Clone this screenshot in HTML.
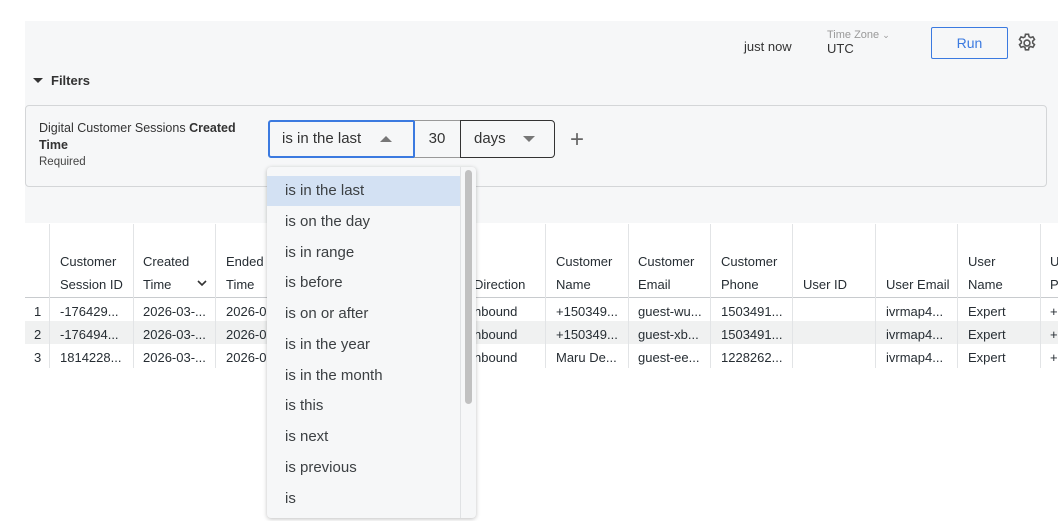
<!DOCTYPE html>
<html><head><style>
*{box-sizing:border-box;margin:0;padding:0}
body{width:1058px;height:521px;overflow:hidden;background:#fff;font-family:"Liberation Sans",Arial,sans-serif;color:#262d33;position:relative}
.a{position:absolute}
.panel{left:25px;top:21px;width:1033px;height:202px;background:#f6f7f8}
.th,.td{position:absolute;font-size:13px;color:#262d33;white-space:nowrap}
.vl{position:absolute;width:1px;background:#e2e4e6;top:224px;height:144px}
.item{position:absolute;left:0;width:193px;height:30px;line-height:30px;padding-left:18px;font-size:15px;color:#3c4043}
.tri{position:absolute;width:0;height:0;border-left:6px solid transparent;border-right:6px solid transparent}
</style></head><body>
<div class="a panel"></div>
<div class="a" style="left:744px;top:39px;font-size:13px;color:#333">just now</div>
<div class="a" style="left:827px;top:29px;font-size:11px;color:#999">Time Zone <span style="font-size:9px">&#8964;</span></div>
<div class="a" style="left:827px;top:41px;font-size:13px;color:#333">UTC</div>
<div class="a" style="left:931px;top:27px;width:77px;height:32px;border:1px solid #3b7ae0;border-radius:2px;color:#3b7ae0;font-size:14px;text-align:center;line-height:30px">Run</div>
<svg class="a" style="left:1016px;top:32px" width="22" height="22" viewBox="0 0 24 24" fill="none" stroke="#555" stroke-width="1.7"><circle cx="12" cy="12" r="3.2"/><path d="M10.3 2.5h3.4l.5 2.6 1.8 1 2.5-.9 1.7 2.9-2 1.8v2.1l2 1.8-1.7 2.9-2.5-.9-1.8 1-.5 2.6h-3.4l-.5-2.6-1.8-1-2.5.9-1.7-2.9 2-1.8V10l-2-1.8 1.7-2.9 2.5.9 1.8-1z"/></svg>
<div class="tri" style="left:33px;top:78px;border-left-width:5px;border-right-width:5px;border-top:5px solid #333"></div>
<div class="a" style="left:51px;top:73px;font-size:13px;font-weight:bold;color:#333">Filters</div>
<div class="a" style="left:25px;top:105px;width:1022px;height:82px;border:1px solid #d4d6d8;border-radius:4px"></div>
<div class="a" style="left:39px;top:120px;font-size:12.5px;line-height:17px;color:#333;width:220px">Digital Customer Sessions <b>Created Time</b></div>
<div class="a" style="left:39px;top:156px;font-size:11.5px;color:#444">Required</div>
<div class="a" style="left:268px;top:120px;width:147px;height:38px;border:2px solid #3b7ae0;border-radius:3px 0 0 3px;background:#f6f7f8;font-size:15px;line-height:34px;padding-left:12px;color:#333">is in the last<div class="tri" style="left:110px;top:14px;border-bottom:6px solid #777"></div></div>
<div class="a" style="left:414px;top:120px;width:47px;height:38px;border:1px solid #999;border-left:none;font-size:15px;line-height:36px;text-align:center;color:#333">30</div>
<div class="a" style="left:460px;top:120px;width:95px;height:38px;border:1px solid #333;border-radius:0 4px 4px 0;font-size:15px;line-height:36px;padding-left:13px;color:#333">days<div class="tri" style="left:62px;top:15px;border-top:6px solid #777"></div></div>
<div class="a" style="left:570px;top:126px;font-size:24px;color:#666;font-weight:300">+</div>

<!-- table -->
<div class="a" style="left:25px;top:297px;width:1033px;height:1px;background:#c8cbce"></div>
<div class="a" style="left:25px;top:321px;width:1033px;height:23px;background:#f0f1f1"></div>
<div class="vl" style="left:49px"></div><div class="vl" style="left:133px"></div><div class="vl" style="left:215px"></div>
<div class="vl" style="left:545px"></div><div class="vl" style="left:628px"></div><div class="vl" style="left:710px"></div><div class="vl" style="left:792px"></div><div class="vl" style="left:875px"></div><div class="vl" style="left:957px"></div><div class="vl" style="left:1040px"></div>
<div class="th" style="left:60px;top:250px;line-height:23px">Customer<br>Session ID</div>
<div class="th" style="left:143px;top:250px;line-height:23px">Created<br>Time</div>
<svg class="a" style="left:197px;top:280px" width="10" height="7" viewBox="0 0 10 7"><path d="M1 1l4 4 4-4" fill="none" stroke="#333" stroke-width="1.6"/></svg>
<div class="th" style="left:226px;top:250px;line-height:23px">Ended<br>Time</div>
<div class="th" style="left:474px;top:277px">Direction</div>
<div class="th" style="left:556px;top:250px;line-height:23px">Customer<br>Name</div>
<div class="th" style="left:638px;top:250px;line-height:23px">Customer<br>Email</div>
<div class="th" style="left:721px;top:250px;line-height:23px">Customer<br>Phone</div>
<div class="th" style="left:803px;top:277px">User ID</div>
<div class="th" style="left:886px;top:277px">User Email</div>
<div class="th" style="left:968px;top:250px;line-height:23px">User<br>Name</div>
<div class="th" style="left:1050px;top:250px;line-height:23px">U<br>P</div>

<div class="td" style="left:34px;top:300px;line-height:23px">1<br>2<br>3</div>
<div class="td" style="left:60px;top:300px;line-height:23px">-176429...<br>-176494...<br>1814228...</div>
<div class="td" style="left:143px;top:300px;line-height:23px">2026-03-...<br>2026-03-...<br>2026-03-...</div>
<div class="td" style="left:226px;top:300px;line-height:23px">2026-03<br>2026-03<br>2026-03</div>
<div class="td" style="left:474px;top:300px;line-height:23px">nbound<br>nbound<br>nbound</div>
<div class="td" style="left:556px;top:300px;line-height:23px">+150349...<br>+150349...<br>Maru De...</div>
<div class="td" style="left:638px;top:300px;line-height:23px">guest-wu...<br>guest-xb...<br>guest-ee...</div>
<div class="td" style="left:721px;top:300px;line-height:23px">1503491...<br>1503491...<br>1228262...</div>
<div class="td" style="left:886px;top:300px;line-height:23px">ivrmap4...<br>ivrmap4...<br>ivrmap4...</div>
<div class="td" style="left:968px;top:300px;line-height:23px">Expert<br>Expert<br>Expert</div>
<div class="td" style="left:1050px;top:300px;line-height:23px">+<br>+<br>+</div>

<!-- dropdown -->
<div class="a" style="left:267px;top:167px;width:209px;height:351px;background:#f6f7f8;border-radius:4px;box-shadow:0 1px 4px rgba(0,0,0,.25);overflow:hidden">
 <div class="a" style="left:193px;top:0;width:1px;height:351px;background:#e0e2e4"></div>
 <div class="a" style="left:198px;top:3px;width:7px;height:234px;background:#c1c1c1;border-radius:4px"></div>
 <div class="item" style="top:9px;background:#d3e1f3">is in the last</div>
 <div class="item" style="top:40px">is on the day</div>
 <div class="item" style="top:71px">is in range</div>
 <div class="item" style="top:101px">is before</div>
 <div class="item" style="top:132px">is on or after</div>
 <div class="item" style="top:163px">is in the year</div>
 <div class="item" style="top:194px">is in the month</div>
 <div class="item" style="top:224px">is this</div>
 <div class="item" style="top:255px">is next</div>
 <div class="item" style="top:286px">is previous</div>
 <div class="item" style="top:317px">is</div>
</div>
</body></html>
